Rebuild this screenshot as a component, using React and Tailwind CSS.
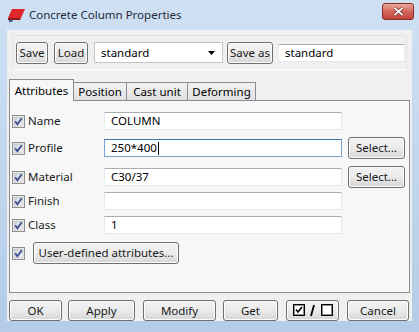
import React from "react"

const font = { fontFamily: '"Noto Sans", "Open Sans", sans-serif' }

function Check({ checked = true }) {
  return (
    <svg width="13" height="13" viewBox="0 0 13 13" className="shrink-0">
      <defs>
        <linearGradient id="cbg" x1="0" y1="0" x2="1" y2="1">
          <stop offset="0" stopColor="#cbcfd5" />
          <stop offset="1" stopColor="#f6f6f6" />
        </linearGradient>
      </defs>
      <rect x="0.5" y="0.5" width="12" height="12" fill="#f4f4f4" stroke="#8f8f8f" />
      <rect x="2" y="2" width="9" height="9" fill="url(#cbg)" stroke="#b5b8bd" strokeWidth="0.6" />
      {checked && (
        <path d="M3.2 6.4 L5.4 9.2 L9.8 3.2" fill="none" stroke="#3b4f8f" strokeWidth="1.8" />
      )}
    </svg>
  )
}

function Btn({ children, className = "" }) {
  return (
    <div
      className={
        "flex items-center justify-center rounded-[3px] border border-[#707070] bg-gradient-to-b from-[#f3f3f3] via-[#ebebeb] to-[#d6d6d6] text-[11.5px] text-[#1a1a1a] shadow-[inset_0_0_0_1px_#fcfcfc] " +
        className
      }
    >
      {children}
    </div>
  )
}

function Field({ value, focused, className = "" }) {
  return (
    <div
      className={
        "flex items-center bg-white px-[6px] text-[11.5px] text-black border " +
        (focused
          ? "border-[#7da2ce] border-t-[#3d7bad] "
          : "border-[#e3e9ef] border-t-[#abadb3] ") +
        className
      }
    >
      {value}
      {focused && <span className="ml-[1px] inline-block h-[13px] w-px bg-black" />}
    </div>
  )
}

function Row({ label, value, focused, select, className = "" }) {
  return (
    <div className={"flex h-[22px] items-center " + className}>
      <div className="ml-[2px] flex w-[92px] items-center gap-[3px]">
        <Check />
        <span className="text-[11.5px] text-[#1a1a1a]">{label}</span>
      </div>
      <Field value={value} focused={focused} className="h-[18px] w-[238px]" />
      {select && <Btn className="ml-[6px] h-[22px] w-[57px]">Select...</Btn>}
    </div>
  )
}

export default function App() {
  const tabs = [
    { name: "Position", w: "w-[53px]" },
    { name: "Cast unit", w: "w-[61px]" },
    { name: "Deforming", w: "w-[68px]" },
  ]
  return (
    <div
      style={font}
      className="flex h-[332px] w-[419px] flex-col bg-gradient-to-b from-[#cfe0f3] via-[#c1d6ee] to-[#b4cce8] px-[7px] pb-[11px]"
    >
      {/* Title bar */}
      <div className="flex h-[30px] items-center">
        <svg width="17" height="13" viewBox="0 0 17 13" className="ml-[1px]">
          <polygon points="4,0 17,0 13,9 0,9" fill="#e0272a" />
          <polygon points="0,9 13,9 12,11 0,11" fill="#8a1c1c" />
          <polygon points="1,11 5,11 4,13 1,13" fill="#3d5a99" />
        </svg>
        <span className="ml-[4px] text-[11.5px] text-[#1e2a3a]">Concrete Column Properties</span>
        <div className="ml-auto mr-[-2px] mb-[7px] flex h-[17px] w-[32px] items-center justify-center rounded-[3px] border border-[#8b2d24] bg-gradient-to-b from-[#e9a99d] via-[#d2665a] to-[#c4463a]">
          <svg width="11" height="9" viewBox="0 0 11 9">
            <path d="M1.5 1 L9.5 8 M9.5 1 L1.5 8" stroke="#5a1a14" strokeWidth="3" />
            <path d="M1.5 1 L9.5 8 M9.5 1 L1.5 8" stroke="#ffffff" strokeWidth="1.7" />
          </svg>
        </div>
      </div>

      {/* Client area */}
      <div className="flex flex-1 flex-col bg-[#f0f0f0] px-[2px]">
        {/* Toolbar group */}
        <div className="mx-[3px] mt-[5px] flex h-[35px] items-center border border-[#e3e3e3] border-b-white pl-[3px]">
          <Btn className="h-[22px] w-[32px]">Save</Btn>
          <Btn className="ml-[6px] h-[22px] w-[34px]">Load</Btn>
          <div className="ml-[6px] flex h-[21px] w-[129px] items-center border border-[#c5c5c5] bg-white pl-[6px] text-[11.5px]">
            standard
            <svg width="7" height="4" viewBox="0 0 7 4" className="ml-auto mr-[7px]">
              <polygon points="0,0 7,0 3.5,4" fill="#000" />
            </svg>
          </div>
          <Btn className="ml-[4px] h-[22px] w-[46px]">Save as</Btn>
          <Field value="standard" className="ml-[5px] h-[18px] w-[127px]" />
        </div>

        {/* Tabs */}
        <div className="mt-[9px] flex items-end">
          <div className="relative z-10 mb-[-1px] flex h-[22px] w-[65px] items-start justify-center border border-b-0 border-[#898c95] bg-[#f7f7f7] pt-[2px] text-[11.5px]">
            Attributes
          </div>
          {tabs.map((t) => (
            <div
              key={t.name}
              className={
                "flex h-[18px] items-center justify-center border border-l-0 border-b-0 border-[#898c95] bg-gradient-to-b from-[#f2f2f2] to-[#e1e1e1] text-[11.5px] " +
                t.w
              }
            >
              {t.name}
            </div>
          ))}
        </div>

        {/* Panel */}
        <div className="flex h-[193px] flex-col border border-[#898c95] bg-[#f7f7f7] pt-[9px]">
          <Row label="Name" value="COLUMN" />
          <Row label="Profile" value="250*400" focused select className="mt-[5px]" />
          <Row label="Material" value="C30/37" select className="mt-[7px]" />
          <Row label="Finish" value="" className="mt-[2px]" />
          <Row label="Class" value="1" className="mt-[2px]" />
          <div className="ml-[2px] mt-[6px] flex h-[22px] items-center">
            <Check />
            <Btn className="ml-[8px] h-[22px] w-[146px]">User-defined attributes...</Btn>
          </div>
        </div>

        {/* Bottom buttons */}
        <div className="mt-[7px] flex items-center">
          <Btn className="h-[21px] w-[53px]">OK</Btn>
          <Btn className="ml-[6px] h-[21px] w-[67px]">Apply</Btn>
          <Btn className="ml-[8px] h-[21px] w-[73px]">Modify</Btn>
          <Btn className="ml-[7px] h-[21px] w-[55px]">Get</Btn>
          <Btn className="ml-[8px] h-[21px] w-[53px]">
            <svg width="40" height="13" viewBox="0 0 40 13">
              <rect x="0.5" y="0.5" width="11" height="11" fill="#fff" stroke="#000" />
              <rect x="1.5" y="1.5" width="9" height="9" fill="none" stroke="#8a8a8a" />
              <path d="M3 5.5 L5 8 L9 3" fill="none" stroke="#000" strokeWidth="1.6" />
              <path d="M18 12 L21 1" stroke="#000" strokeWidth="1.8" />
              <rect x="28.5" y="0.5" width="11" height="11" fill="#fff" stroke="#000" />
              <rect x="29.5" y="1.5" width="9" height="9" fill="none" stroke="#8a8a8a" />
            </svg>
          </Btn>
          <Btn className="ml-[8px] h-[21px] w-[62px]">Cancel</Btn>
        </div>
      </div>
    </div>
  )
}
